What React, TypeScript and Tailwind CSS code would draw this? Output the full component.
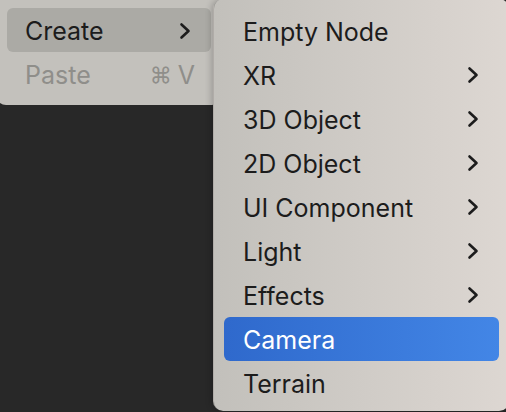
import React from "react";

const Chevron = ({ className = "" }: { className?: string }) => (
  <svg
    width="12"
    height="18"
    viewBox="0 0 12 18"
    fill="none"
    className={className}
  >
    <polyline
      points="2.5,2.5 9.5,9 2.5,15.5"
      stroke="currentColor"
      strokeWidth="2.6"
      strokeLinecap="round"
      strokeLinejoin="round"
    />
  </svg>
);

type Item = { label: string; sub?: boolean; active?: boolean };

const items: Item[] = [
  { label: "Empty Node" },
  { label: "XR", sub: true },
  { label: "3D Object", sub: true },
  { label: "2D Object", sub: true },
  { label: "UI Component", sub: true },
  { label: "Light", sub: true },
  { label: "Effects", sub: true },
  { label: "Camera", active: true },
  { label: "Terrain" },
];

export default function App() {
  return (
    <div
      className="relative w-[506px] h-[412px] overflow-hidden bg-[#282828] text-[25px] leading-none text-[#1c1c1c]"
      style={{ fontFamily: "Inter, 'Liberation Sans', sans-serif" }}
    >
      {/* Parent context menu */}
      <div className="absolute left-[-4px] top-[-3px] w-[226px] rounded-[10px] bg-[#c3c1bc] pt-[11px] pb-[9px] px-[11px]">
        <div className="flex h-[44px] items-center justify-between rounded-[6px] bg-[#abaaa5] pl-[18px] pr-[20px] pt-[2px]">
          <span>Create</span>
          <Chevron className="text-[#1c1c1c]" />
        </div>
        <div className="flex h-[44px] items-center justify-between pl-[18px] pr-[16px] pt-[2px] text-[#8f8e8a]">
          <span>Paste</span>
          <span className="flex items-center gap-[6px]">
            <span className="text-[22px]">⌘</span>
            <span>V</span>
          </span>
        </div>
      </div>

      {/* Submenu */}
      <div className="absolute left-[213px] top-[-1px] right-[-3px] h-[412px] rounded-[10px] border-l border-black/20 bg-gradient-to-r from-[#c2c0bb] to-[#ddd7d2] pt-[10px] px-[10px] shadow-[-2px_0_6px_rgba(0,0,0,0.2)]">
        {items.map((it) => (
          <div
            key={it.label}
            className={
              it.active
                ? "flex h-[44px] items-center justify-between rounded-[6px] bg-gradient-to-r from-[#2f69cc] to-[#4386e6] pl-[19px] pr-[20px] pt-[2px] text-white"
                : "flex h-[44px] items-center justify-between pl-[19px] pr-[20px] pt-[2px]"
            }
          >
            <span>{it.label}</span>
            {it.sub && <Chevron className="-mt-[2px]" />}
          </div>
        ))}
      </div>
    </div>
  );
}
